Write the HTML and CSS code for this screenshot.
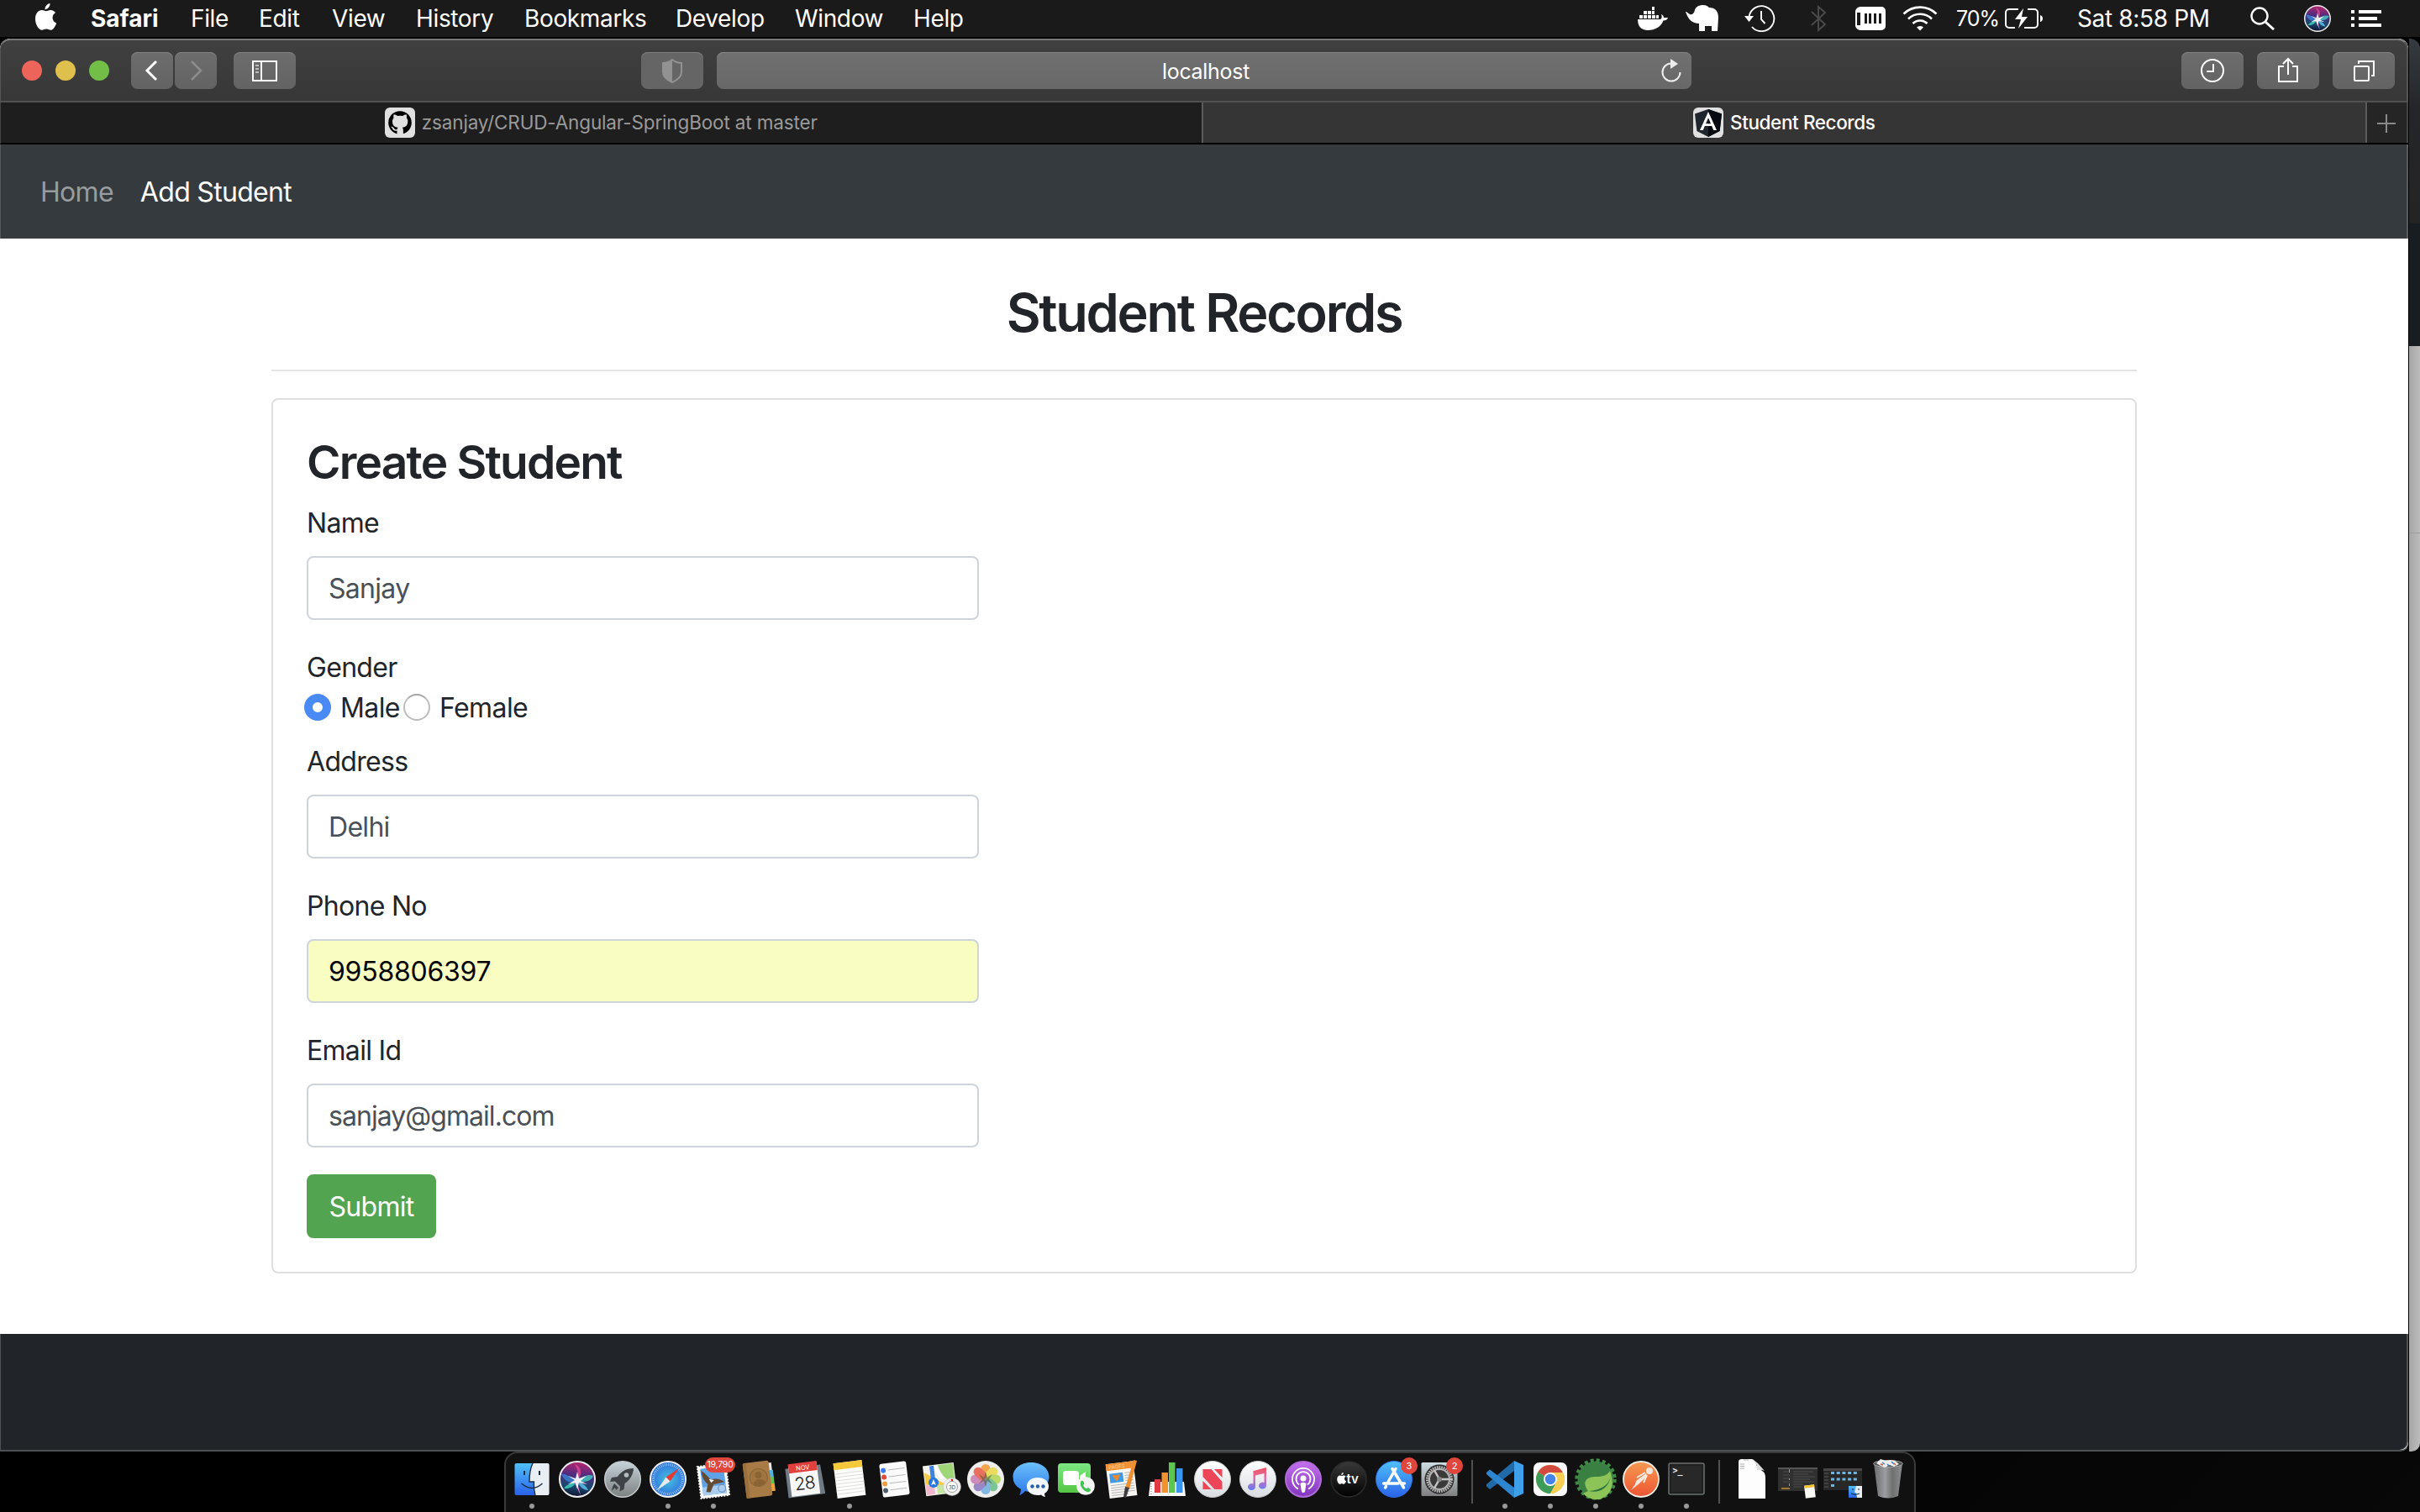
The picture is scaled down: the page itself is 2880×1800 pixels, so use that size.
FILE: index.html
```html
<!DOCTYPE html>
<html lang="en">
<head>
<meta charset="utf-8">
<title>Student Records</title>
<link rel="stylesheet" href="styles.css">
</head>
<body>
<svg class="defs" width="0" height="0" aria-hidden="true">
  <defs>
    <linearGradient id="silver" x1="0" y1="0" x2="0" y2="1"><stop offset="0" stop-color="#fff"/><stop offset="1" stop-color="#d8dbe0"/></linearGradient>
    <linearGradient id="rocketBg" x1="0" y1="0" x2="0" y2="1"><stop offset="0" stop-color="#c5d3da"/><stop offset="1" stop-color="#7d8080"/></linearGradient>
    <linearGradient id="blue" x1="0" y1="0" x2="0" y2="1"><stop offset="0" stop-color="#4fc0fa"/><stop offset="1" stop-color="#2a62ea"/></linearGradient>
    <linearGradient id="bubble" x1="0" y1="0" x2="0" y2="1"><stop offset="0" stop-color="#6bc0f8"/><stop offset="1" stop-color="#2c78f0"/></linearGradient>
    <linearGradient id="green" x1="0" y1="0" x2="0" y2="1"><stop offset="0" stop-color="#7be882"/><stop offset="1" stop-color="#55c544"/></linearGradient>
    <linearGradient id="purple" x1="0" y1="0" x2="0" y2="1"><stop offset="0" stop-color="#c471ee"/><stop offset="1" stop-color="#8136bd"/></linearGradient>
    <linearGradient id="black" x1="0" y1="0" x2="0" y2="1"><stop offset="0" stop-color="#3a3a3a"/><stop offset="1" stop-color="#000"/></linearGradient>
    <linearGradient id="orange" x1="0" y1="0" x2="0" y2="1"><stop offset="0" stop-color="#f59a52"/><stop offset="1" stop-color="#ef5533"/></linearGradient>
    <linearGradient id="note" x1="0" y1="0" x2="0" y2="1"><stop offset="0" stop-color="#f0525c"/><stop offset=".45" stop-color="#e36ea8"/><stop offset="1" stop-color="#5f7cf8"/></linearGradient>
    <linearGradient id="trash" x1="0" y1="0" x2="1" y2="0"><stop offset="0" stop-color="#6a6c6e"/><stop offset=".4" stop-color="#9b9da0"/><stop offset=".65" stop-color="#6d6f71"/><stop offset="1" stop-color="#8d8f92"/></linearGradient>
    <linearGradient id="prefs" x1="0" y1="0" x2="0" y2="1"><stop offset="0" stop-color="#cfdde4"/><stop offset="1" stop-color="#7e8080"/></linearGradient>
    <radialGradient id="safari"><stop offset="0" stop-color="#48c2dc"/><stop offset="1" stop-color="#2f6fe0"/></radialGradient>
    <linearGradient id="siri" x1=".5" y1="0" x2=".4" y2="1"><stop offset="0" stop-color="#b8256e"/><stop offset=".4" stop-color="#4a2c80"/><stop offset=".7" stop-color="#1a4a70"/><stop offset="1" stop-color="#101030"/></linearGradient>
    <symbol id="siri-orb" viewBox="0 0 44 44">
      <circle cx="22" cy="22" r="21" fill="url(#siri)" stroke="#eee" stroke-width="2"/>
      <path d="M22 24C12 18 7 15 3 16c4 8 9 12 19 8z" fill="#3a86d8" opacity=".8"/>
      <path d="M22 24C14 26 8 30 6 33c8 1 13-4 16-9z" fill="#3fd8c0" opacity=".8"/>
      <path d="M22 24c9-7 14-8 19-6-3 7-10 8-19 6z" fill="#46d8c8" opacity=".75"/>
      <path d="M22 24c2-10 0-14-3-20 8 3 10 12 3 20z" fill="#f04a90" opacity=".7"/>
      <path d="M22 24c8 3 11 7 13 11-6 0-10-4-13-11z" fill="#62c8f0" opacity=".8"/>
      <path d="M21 23l5 18-7-15z" fill="#ff8ae0"/>
      <path d="M22 13l2 8 9-3-7 6 8 4-10-2-2 8-2-8-9 2 8-5-8-5 9 3z" fill="#fff" opacity=".9"/>
    </symbol>
  </defs>
</svg>

<header class="menubar">
  <svg class="apple" viewBox="0 0 26 32"><path fill="#fff" d="M18 0c.3 3.800-2.900 7.300-6 7.200C11.700 3.900 15 .3 18 0zM13.300 9.200c1.500 0 3-1.300 5.400-1.300 2.600 0 4.700 1.400 5.900 3.200-5.400 3.300-4.300 10.600 1.100 12.600C24 28 21.400 31.800 18.800 31.800c-2 0-2.800-1.200-5.200-1.200-2.300 0-3.300 1.200-5.100 1.200C4.700 31.800.5 25 .5 18.400.5 12 4.300 8 8.200 8c2.300 0 3.900 1.200 5.100 1.200z"/></svg>
  <nav class="menus">
    <b>Safari</b><span>File</span><span>Edit</span><span>View</span><span>History</span><span>Bookmarks</span><span>Develop</span><span>Window</span><span>Help</span>
  </nav>
  <div class="status">
    <svg width="36" height="28" viewBox="0 0 36 28" fill="#fff"><path d="M0 15h27c2-1 2-3 1-6 2 1 3 2 3 4h5c-.5 2.500-3 3.500-5.500 3.500C27.500 24 21 28 12 28 4 28 0 23 0 15z"/><path d="M2 10h4v4H2zM7 10h4v4H7zM12 10h4v4h-4zM17 10h4v4h-4zM22 10h3v4h-3zM7 5h4v4H7zM12 5h4v4h-4zM17 5h3v4h-3zM17 0h3v4h-3z"/></svg>
    <svg width="41" height="32" viewBox="0 0 41 32" fill="#fff"><path d="M0 8c2 0 3 2 5 3 3 1 5-1 6-5 1-4 5-6 10-6 4 0 6 2 7 3 7 0 11 4 11 12l-1 16h-7v-6h-8v6h-7v-9C8 22 3 17 0 8z"/></svg>
    <svg width="38" height="32" viewBox="0 0 38 32" fill="none" stroke="#fff" stroke-width="1.900"><path d="M5.500 14A15 15 0 1 1 9 26"/><path d="M20 7v10l4.500 5"/><path d="M0 13h11l-5.500 7z" fill="#fff" stroke="none"/></svg>
    <svg width="20" height="32" viewBox="0 0 20 32" fill="none" stroke="#4a4a4a" stroke-width="2"><path d="M1 8l16 15-8 7V2l8 7L1 24"/></svg>
    <svg width="36" height="28" viewBox="0 0 36 28"><path fill="#fff" d="M6 0h25a5 5 0 0 1 5 5v18a5 5 0 0 1-5 5H6a7 7 0 0 1-6-5V5a7 7 0 0 1 6-5z"/><path d="M2 7h4v15H2zM11 8h3v12h-3zM16 8h3v12h-3zM22 8h3v12h-3zM28 8h3v12h-3z" fill="#1a1a1a"/></svg>
    <svg width="42" height="30" viewBox="0 0 42 30" fill="none" stroke="#fff" stroke-width="2.600"><path d="M1.500 9.500a28 28 0 0 1 39 0M7 15.500a20 20 0 0 1 28 0M12.500 21a12 12 0 0 1 17 0"/><path d="M17 25.500a6 6 0 0 1 8 0l-4 4z" fill="#fff" stroke="none"/></svg>
    <span class="battery">70%</span>
    <svg width="46" height="24" viewBox="0 0 46 24" fill="none" stroke="#fff" stroke-width="2"><path d="M16 1H5a4 4 0 0 0-4 4v14a4 4 0 0 0 4 4h7M27 1h8a4 4 0 0 1 4 4v14a4 4 0 0 1-4 4H23"/><path d="M22 0L12 13h7l-3 11 11-14h-7z" fill="#fff" stroke="none"/><path d="M42 8v8q3-1 3-4t-3-4z" fill="#fff" stroke="none"/></svg>
    <span class="clock">Sat 8:58 PM</span>
    <svg width="30" height="28" viewBox="0 0 30 28" fill="none" stroke="#fff" stroke-width="2.400"><circle cx="11" cy="11" r="9.500"/><path d="M18 18l10 9" stroke-width="3"/></svg>
    <svg width="32" height="32"><use href="#siri-orb"/></svg>
    <svg width="36" height="20" viewBox="0 0 36 20" fill="#fff"><path d="M0 0h4v4H0zM9 0h27v4H9zM0 8h4v4H0zM9 8h22v4H9zM0 16h4v4H0zM9 16h27v4H9z"/></svg>
  </div>
</header>

<div class="desktop">
  <div class="window">
    <div class="toolbar">
      <div class="lights"><i class="red"></i><i class="yellow"></i><i class="lime"></i></div>
      <div class="history">
        <div class="tool"><svg width="50" height="44" fill="none" stroke="#fff" stroke-width="3"><path d="M30 11L19 22l11 11"/></svg></div>
        <div class="tool"><svg width="50" height="44" fill="none" stroke="#8c8c8c" stroke-width="2.500"><path d="M20 11l11 11-11 11"/></svg></div>
      </div>
      <div class="tool sidebar"><svg width="74" height="44" fill="none" stroke="#fff" stroke-width="2"><path d="M23 11h28v23H23zM33 11v23"/><path d="M26 16h4M26 20h4M26 24h4" stroke="#bbb"/></svg></div>
      <div class="tool shield"><svg width="74" height="44"><path d="M37 9q5 4 11 4v11q0 7-11 12-11-5-11-12V13q6 0 11-4z" fill="none" stroke="#929292" stroke-width="2"/><path d="M37 9v27q-11-5-11-12V13q6 0 11-4z" fill="#929292"/></svg></div>
      <div class="address"><span>localhost</span><svg width="26" height="28" viewBox="0 0 26 28" fill="none" stroke="#eee" stroke-width="2"><path d="M13 5.500A10.500 10.500 0 1 0 23.500 16"/><path d="M12 0l9 6-9 6z" fill="#eee" stroke="none"/></svg></div>
      <div class="actions">
        <div class="tool"><svg width="74" height="44" fill="none" stroke="#fff" stroke-width="2"><circle cx="37" cy="22" r="13"/><path d="M38 14v9h-8"/></svg></div>
        <div class="tool"><svg width="74" height="44" fill="none" stroke="#fff" stroke-width="2"><path d="M32 17h-6v18h22V17h-6M37 27V8M31 14l6-6 6 6"/></svg></div>
        <div class="tool"><svg width="74" height="44" fill="none" stroke="#fff" stroke-width="2"><rect x="26" y="17" width="17" height="17" rx="1"/><path d="M31 14v-3h18v17h-3"/></svg></div>
      </div>
    </div>
    <div class="tabs">
      <div class="tab">
        <svg class="favicon" viewBox="0 0 36 36"><rect width="36" height="36" rx="6" fill="#e0e0e0"/><circle cx="18" cy="18" r="13.800" fill="#000"/><path fill="#e0e0e0" d="M14.500 32v-4.500c-3.500.8-5-1-5.800-3-.4-.8-1-1.200-1.500-1.600 2-.4 3 .8 3.800 2.100 1 1.500 2.300 1.400 3.600 1 .1-.9.5-1.700 1-2.200-5-.6-6.600-3.300-6.600-7.300 0-1.700.5-2.900 1.500-4-.4-1.500-.3-3 .2-4.200 1.800 0 3 .9 4.200 1.700a15 15 0 0 1 6.500 0c1.300-.8 2.400-1.700 4.200-1.700.5 1.200.6 2.700.2 4.200 1 1.100 1.500 2.300 1.500 4 0 4-1.700 6.700-6.600 7.300.7.700 1.200 1.800 1.200 3.200v5z"/></svg>
        <span>zsanjay/CRUD-Angular-SpringBoot at master</span>
      </div>
      <div class="tab active">
        <svg class="favicon" viewBox="0 0 36 36"><rect width="36" height="36" rx="6" fill="#e0e0e0"/><path d="M18 2l16 5.500-2.400 20.500L18 35 4.400 28 2 7.500z" fill="#20262e"/><path d="M18 2l16 5.500-2.400 20.500L18 35z" fill="#05090f"/><path d="M18 5L8 27h3.800l2-5h8.400l2 5H28zm0 7.200l3 7h-6z" fill="#fff"/></svg>
        <span>Student Records</span>
      </div>
      <div class="newtab"><svg width="24" height="24" stroke="#8a8a8a" stroke-width="2"><path d="M12 1v22M1 12h22"/></svg></div>
    </div>
    <nav class="navbar"><a class="home">Home</a><a class="add">Add Student</a></nav>
    <main class="page">
      <div class="container">
        <h2 class="title">Student Records</h2>
        <form class="card">
          <h3>Create Student</h3>
          <label>Name</label>
          <div class="field">Sanjay</div>
          <label class="gender">Gender</label>
          <div class="radios"><i class="radio checked"></i><span class="male">Male</span><i class="radio"></i><span>Female</span></div>
          <label>Address</label>
          <div class="field">Delhi</div>
          <label>Phone No</label>
          <div class="field filled">9958806397</div>
          <label>Email Id</label>
          <div class="field email">sanjay@gmail.com</div>
          <div class="submit">Submit</div>
        </form>
      </div>
    </main>
    <footer class="footer"></footer>
  </div>
  <div class="behind"></div>
</div>

<div class="dock-area">
<div class="dock">
  <div class="app run"><svg viewBox="0 0 54 54"><rect x="6.500" y="8" width="41" height="38" rx="2" fill="url(#blue)"/><path d="M28 8h17.500a2 2 0 0 1 2 2v34a2 2 0 0 1-2 2H31q-2-7-1.500-16H24q0-14 4-22z" fill="#e9eef5"/><path d="M18 17v5M36 17v5" stroke="#1c2b3c" stroke-width="2"/><path d="M14.500 32q13 11 25 0M28 8q-4 8-4 22h5.500q-.5 9 1.500 16" stroke="#1c2b3c" stroke-width="1.400" fill="none"/></svg></div>
  <div class="app"><svg viewBox="0 0 54 54"><use href="#siri-orb" x="5" y="5" width="44" height="44"/></svg></div>
  <div class="app"><svg viewBox="0 0 54 54"><circle cx="27" cy="27" r="21.300" fill="url(#rocketBg)" stroke="#c2cacd" stroke-width="1.500"/><path d="M40 14c-9 0-15 4-19 10l-7 1-2 5 6-.500 6 6-.5 6 5-2.500 1-7c6-4 10-10 10.500-18z" fill="#3f4345"/><circle cx="31.500" cy="22" r="2.800" fill="#b3bdc1"/><path d="M17 32l5 5-3 3-1-3-4 4 1-5z" fill="#3f4345"/></svg></div>
  <div class="app run"><svg viewBox="0 0 54 54"><circle cx="27" cy="27" r="21" fill="url(#safari)" stroke="#eef0f2" stroke-width="2"/><circle cx="27" cy="27" r="17.500" fill="none" stroke="#a9d3f5" stroke-width="3" stroke-dasharray=".8 1.490"/><path d="M40 14L24.500 24.500l5 5z" fill="#e8382f"/><path d="M14 40l10.500-15.500 5 5z" fill="#e8ecee"/></svg></div>
  <div class="app run"><svg viewBox="0 0 54 54"><g transform="rotate(-7 27 29)"><rect x="10" y="10" width="34" height="38" fill="#fff" stroke="#fff" stroke-width="2" stroke-dasharray="2 1.500"/><rect x="13" y="13" width="28" height="32" fill="#5fa3e6"/><path d="M13 35h28v10H13z" fill="#a9cdee"/><path d="M14 15c4 3 7 8 10 12 5-1 12 0 16 5-5 0-9 1-13 1l-5 9-5-1 3-9c-5-5-6-11-6-17z" fill="#654b31"/><path d="M22 26l6 2-4 3z" fill="#fff"/><circle cx="36" cy="39" r="4.500" fill="none" stroke="#6889ac"/></g></svg><span class="badge wide">19,790</span></div>
  <div class="app"><svg viewBox="0 0 54 54"><g transform="rotate(-7 27 27)"><path d="M40 9h4v10h-4z" fill="#e9e9e9"/><path d="M40 18h5v9h-5z" fill="#49b5e8"/><path d="M40 26h5v9h-5z" fill="#68bf55"/><path d="M40 34h5v9h-5z" fill="#f1a33b"/><rect x="10" y="6" width="31" height="42" rx="2" fill="#a87b46"/><path d="M10 7h4v41h-4z" fill="#98703c"/><circle cx="27" cy="25" r="10.500" fill="#a1753f" stroke="#8a6433"/><circle cx="27" cy="22" r="4" fill="#8a6433"/><path d="M19.500 32q2-5 7.500-5t7.500 5q-7 6-15 0z" fill="#8a6433"/></g></svg></div>
  <div class="app"><svg viewBox="0 0 54 54"><g transform="rotate(-7 27 27)"><path d="M6 12h42l2 35H6z" fill="#6f7b84"/><path d="M10 8h34v38H10z" fill="#f7f7f7"/><path d="M10 7h34v11H10z" fill="#e0413d"/><text x="27" y="15.800" class="cal-month">NOV</text><text x="27" y="39" class="cal-day">28</text></g></svg></div>
  <div class="app run"><svg viewBox="0 0 54 54"><g transform="rotate(-7 27 27)"><path d="M10 6h34v42H10z" fill="#fdfdfb"/><path d="M10 6h34v8H10z" fill="#f6c93a"/><path d="M10 19h34M10 23h34M10 27h34M10 31h34M10 35h34M10 39h34M10 43h34" stroke="#dcdcdc"/></g></svg></div>
  <div class="app"><svg viewBox="0 0 54 54"><g transform="rotate(-7 27 27)"><rect x="10.500" y="7" width="32" height="40" rx="2.500" fill="#fafafa"/><path d="M20 15h20M20 23h20M20 31h20M20 39h20" stroke="#b9b9b9"/><circle cx="14.500" cy="15" r="3" fill="#3b79f6"/><circle cx="14.500" cy="23" r="3" fill="#e04a3a"/><circle cx="14.500" cy="31" r="3" fill="#f09a38"/><circle cx="14.500" cy="39" r="3" fill="#4d5a6a"/></g></svg></div>
  <div class="app"><svg viewBox="0 0 54 54"><g transform="rotate(-7 27 27)"><path d="M8 9h37v36H8z" fill="#f4f2ea"/><path d="M26 10h18v24q-14-5-18-24z" fill="#9ed678"/><path d="M23 10q3 18 21 26" fill="none" stroke="#fff" stroke-width="4"/><path d="M9 17l24 17v5L9 31z" fill="#f7ca45"/><path d="M9 31l10 5v8H9z" fill="#f2b6cd"/><path d="M16 10h5v20h-5z" fill="#3d83e0"/><path d="M22 34h12v10H22z" fill="#c6e7a4"/></g><circle cx="19" cy="31" r="6" fill="#2478e0"/><path d="M19 27l3 7-3-1.500-3 1.500z" fill="#fff"/><circle cx="41" cy="36" r="10.500" fill="#f0f0f0" stroke="#bbb" stroke-width=".6"/><circle cx="41" cy="36" r="6.500" fill="#fff" stroke="#9b9b9b"/><text x="41" y="38.500" class="map-label">3D</text><circle cx="41" cy="28" r="1.300" fill="#d22"/></svg></div>
  <div class="app"><svg viewBox="0 0 54 54"><circle cx="27" cy="27" r="22" fill="#eeeeec"/><g opacity=".85"><rect x="21.500" y="9" width="11" height="17" rx="5.500" fill="#f29a38"/><rect x="21.500" y="9" width="11" height="17" rx="5.500" fill="#ecd945" transform="rotate(45 27 27)"/><rect x="21.500" y="9" width="11" height="17" rx="5.500" fill="#b3d650" transform="rotate(90 27 27)"/><rect x="21.500" y="9" width="11" height="17" rx="5.500" fill="#66bd88" transform="rotate(135 27 27)"/><rect x="21.500" y="9" width="11" height="17" rx="5.500" fill="#6fafe0" transform="rotate(180 27 27)"/><rect x="21.500" y="9" width="11" height="17" rx="5.500" fill="#8b76c0" transform="rotate(225 27 27)"/><rect x="21.500" y="9" width="11" height="17" rx="5.500" fill="#c77ab0" transform="rotate(270 27 27)"/><rect x="21.500" y="9" width="11" height="17" rx="5.500" fill="#ea5946" transform="rotate(315 27 27)"/></g><path d="M27 18l2 7 6-4-4 6 4 6-6-4-2 7-2-7-6 4 4-6-4-6 6 4z" fill="#555b3a" opacity=".6"/></svg></div>
  <div class="app"><svg viewBox="0 0 54 54"><path d="M27 7c12 0 21.500 7 21.500 17S39 42 27 42q-4 0-7-1-3 4-7 5 2-3 2-7Q5.500 34 5.500 24C5.500 14 15 7 27 7z" fill="url(#bubble)"/><path d="M35 25c8 0 13 4.500 13 10.500 0 4-2 6.500-5 8.500q0 2 1 4-3-.5-5-2.500-2 .5-4 .5c-8 0-13-4.500-13-10.500S27 25 35 25z" fill="#f4f8fd"/><g fill="#2b5fa8"><circle cx="28.500" cy="35.500" r="2.200"/><circle cx="35" cy="35.500" r="2.200"/><circle cx="41.500" cy="35.500" r="2.200"/></g></svg></div>
  <div class="app"><svg viewBox="0 0 54 54"><rect x="5" y="8" width="39" height="35" rx="4" fill="url(#green)"/><rect x="11" y="17" width="19" height="17" rx="3.500" fill="#fff"/><path d="M31 23l7-5v15l-7-5z" fill="#fff"/><circle cx="38" cy="35" r="10.800" fill="#f4f4f4"/><path d="M32 30q1-2 3-1l1.500 3-1.500 2q1 3 4 4l2-1 3 2q0 2-2 3-4 1-7-3-4-4-3-9z" fill="#42c253"/></svg></div>
  <div class="app"><svg viewBox="0 0 54 54"><g transform="rotate(-7 27 27)"><path d="M10 7h33v41H10z" fill="#f7f6f3"/><path d="M10 7h33v8H10z" fill="#ef9134"/><path d="M13 19h16v11H13z" fill="#3f9be8"/><path d="M16 21h10l-5 8z" fill="#f08a2c"/><path d="M31 20h10M31 23h10M31 26h10M31 29h10M13 33h28M13 36h28M13 39h28M13 42h28M13 45h20" stroke="#b5b5b5"/><text x="13" y="13.500" class="pages-label">PAGES</text></g><path d="M41 4l4 1-9 34-5-1z" fill="#ef8e2e"/><path d="M31 36l5 1-4 12-3-1z" fill="#3d3d40"/></svg></div>
  <div class="app"><svg viewBox="0 0 54 54"><path d="M7 30h40l2 17H5z" fill="#fafafa"/><path d="M8 32v13" stroke="#777" stroke-dasharray="1 2"/><path d="M12 27h7v16h-7z" fill="#e03b42"/><path d="M20.500 19h7.500v24h-7.500z" fill="#f0932f"/><path d="M29 7h7.500v36H29z" fill="#5cc650"/><path d="M38 14h7.500v29H38z" fill="#3b95f0"/></svg></div>
  <div class="app"><svg viewBox="0 0 54 54"><circle cx="27" cy="27" r="21.500" fill="url(#silver)" stroke="#c8cacd"/><path d="M15.500 15h10L38.500 30v9h-9L15.500 24zM15.500 29l10 10h-10zM29 15h9.500v10z" fill="#ec4658"/></svg></div>
  <div class="app"><svg viewBox="0 0 54 54"><circle cx="27" cy="27" r="21.500" fill="url(#silver)" stroke="#c8cacd"/><path d="M22 17l15-4v21.500a4.500 4 0 1 1-2.500-3.500V20L24 22.500v13.500a4.500 4 0 1 1-2.500-3.500V17z" fill="url(#note)"/></svg></div>
  <div class="app"><svg viewBox="0 0 54 54"><circle cx="27" cy="27" r="21" fill="url(#purple)" stroke="#b06bd8" stroke-width="2"/><g fill="none" stroke="#fff" stroke-width="1.800"><path d="M21 38.500a13 13 0 1 1 12 0M22 33.500a8.500 8.500 0 1 1 10 0"/></g><circle cx="27" cy="26" r="3.500" fill="#fff"/><path d="M23.500 32q3.500-2.500 7 0l-1.500 10q-2 2-4 0z" fill="#fff"/></svg></div>
  <div class="app"><svg viewBox="0 0 54 54"><circle cx="27" cy="27" r="21" fill="url(#black)" stroke="#2c2c2c" stroke-width="1.500"/><path transform="translate(13 19) scale(.43)" fill="#fff" d="M18 0c.3 3.800-2.900 7.300-6 7.200C11.700 3.900 15 .3 18 0zM13.300 9.200c1.500 0 3-1.300 5.400-1.300 2.600 0 4.700 1.400 5.900 3.200-5.400 3.300-4.300 10.600 1.100 12.600C24 28 21.400 31.800 18.800 31.800c-2 0-2.800-1.200-5.200-1.200-2.300 0-3.300 1.200-5.100 1.200C4.700 31.800.5 25 .5 18.400.5 12 4.300 8 8.200 8c2.300 0 3.900 1.200 5.100 1.200z"/><text x="24.500" y="32" class="tv-label">tv</text></svg></div>
  <div class="app"><svg viewBox="0 0 54 54"><circle cx="27" cy="27" r="21.500" fill="url(#blue)" stroke="#2d70e4"/><g stroke="#fff" stroke-width="3.500" stroke-linecap="round"><path d="M29 14.500L19 32M25 14.500L38.500 37M14.500 32H32M36.500 32H39.500M17.500 35.500L16.500 37"/></g></svg><span class="badge">3</span></div>
  <div class="app"><svg viewBox="0 0 54 54"><rect x="5.500" y="7" width="43" height="40" rx="1.500" fill="url(#prefs)"/><circle cx="27" cy="27" r="17.500" fill="#2b2b2b"/><circle cx="27" cy="27" r="14.500" fill="#4a4a4a" stroke="#bdbdbd" stroke-width="3" stroke-dasharray="1.600 1.100"/><circle cx="27" cy="27" r="12" fill="#3a3a3a" stroke="#b5b5b5" stroke-width="2"/><path d="M27 27h12M27 27l-6-10.500M27 27l-6 10.500" stroke="#c5c5c5" stroke-width="2.500"/><circle cx="27" cy="27" r="3" fill="#888"/></svg><span class="badge">2</span></div>
  <div class="sep"></div>
  <div class="app run"><svg viewBox="0 0 54 54"><path d="M38 5l11 5v34l-11 5z" fill="#3fa0ea"/><path d="M38 5v12L9 39l-4-3.500V33z" fill="#2269a8"/><path d="M5 19l4-3.500L38 37v12L5 21z" fill="#2f86d0"/></svg></div>
  <div class="app run"><svg viewBox="0 0 54 54"><rect x="7" y="7" width="40" height="40" rx="7" fill="#fafafa"/><circle cx="27" cy="27" r="17" fill="#f8cf52"/><path d="M27 27L12.300 18.500A17 17 0 0 1 41.700 18.500z" fill="#d24b3e"/><path d="M12.300 18.500A17 17 0 0 0 27 44l8-13.500-8-3.500z" fill="#3d9b5c"/><path d="M27 19h15A17 17 0 0 1 27 44l7-13z" fill="#f8cf52"/><circle cx="27" cy="27" r="8" fill="#fff"/><circle cx="27" cy="27" r="6.200" fill="#4583ec"/></svg></div>
  <div class="app run"><svg viewBox="0 0 54 54"><circle cx="27" cy="27" r="21.500" fill="#3a8043"/><circle cx="27" cy="27" r="22.500" fill="none" stroke="#3f8a45" stroke-width="4.500" stroke-dasharray="4 3.070"/><path d="M44 17c6 16 2 30-13 34-9 1-15-3-19-7l6-3c-9-12 0-18 10-17 8 0 13-2 16-7z" fill="#8cc457"/><path d="M45 24c-3 11-13 16-26 17 10 3 23-2 26-17z" fill="#2d7040"/></svg></div>
  <div class="app run"><svg viewBox="0 0 54 54"><circle cx="27" cy="27" r="21" fill="url(#orange)" stroke="#f6ede6" stroke-width="1.800"/><circle cx="37" cy="17" r="4" fill="#f4e6dc"/><path d="M33 20L21 29l-1 4-5 7 10-8 9-9z" fill="#fbeadf"/><path d="M34 22l-4 9M32 19l-10 6" stroke="#fbeadf" stroke-width="2"/></svg></div>
  <div class="app run"><svg viewBox="0 0 54 54"><rect x="6" y="8" width="42" height="37" rx="2" fill="#202020" stroke="#6a7270" stroke-width="1.500"/><path d="M9 11h36v31H9z" fill="#282828"/><text x="10.500" y="20" class="term-label">&gt;_</text></svg></div>
  <div class="sep"></div>
  <div class="app"><svg viewBox="0 0 54 54"><path d="M11 6q0-3 4-3h12c5 2 5 5 5 7l7 7q4 2 4 8v25H11z" fill="#fdfdfd"/><path d="M27 4q4 1 7 4l8 9q-4-2-9-1 1-8-6-12z" fill="#dcdcdc"/><path d="M13 9h5M13 11.500h5M13 14h5M17 4h6" stroke="#999" stroke-width=".8"/></svg></div>
  <div class="app"><svg viewBox="0 0 54 54"><rect x="4" y="13" width="47" height="28" fill="#303030"/><path d="M4 14h47" stroke="#555" stroke-width="2"/><path d="M10 18h8M10 22h8M10 26h8M10 30h8M22 18h24M22 21h18M22 24h26M22 27h20M22 30h25M22 33h12M22 36h10" stroke="#4c4c4c"/><path d="M17.500 15v4M17.500 26v2M17.500 32v3" stroke="#999"/><path d="M8 38h10" stroke="#c98f30" stroke-width="1.500"/><g transform="rotate(-7 42 42)"><path d="M36 34h12v15H36z" fill="#f8f8f4"/><path d="M36 34h12v3H36z" fill="#f3c432"/></g></svg></div>
  <div class="app"><svg viewBox="0 0 54 54"><rect x="4" y="14" width="46" height="26" fill="#282828"/><path d="M4 15.500h46" stroke="#494547" stroke-width="3"/><path d="M5 20h5M5 24h5M5 28h5M5 32h5M5 36h5" stroke="#5b5b5b"/><path d="M13 19.500h33M13 27h33M13 34.500h4" stroke="#70b4e0" stroke-width="2.800" stroke-dasharray="4 2.700"/><rect x="34" y="35" width="16" height="14" fill="url(#blue)"/><path d="M43 35h7v14h-6l-1-6h-2z" fill="#e9eef5"/><path d="M37 44q5 3 10 0M39 38v2M46 38v2" stroke="#123" fill="none"/></svg></div>
  <div class="app"><svg viewBox="0 0 54 54"><path d="M10 8h34l-5 39q-12 5-24 0z" fill="url(#trash)"/><ellipse cx="27" cy="8.500" rx="17.500" ry="4" fill="#4e5052" stroke="#a4a6a8"/><path d="M13 8l5-5 6 2 6-1 5 1 5 4-6 3-5-2-6 3-5-2z" fill="#eee"/><path d="M20 7l3 2M31 6l3 3M26 9l2 2" stroke="#3f7ab8" stroke-width="1.500"/><path d="M18 9l3 1M34 8l2 2" stroke="#c75b45" stroke-width="1.500"/></svg></div>
</div>
</div>
</body>
</html>
```
FILE: styles.css
```css
* { box-sizing: border-box; }

body {
  margin: 0;
  width: 2880px;
  height: 1800px;
  overflow: hidden;
  background: #000;
  color: #212529;
  font-family: Inter, "Liberation Sans", sans-serif;
  display: flex;
  flex-direction: column;
}

svg { display: block; flex: none; }
.defs { position: absolute; }

/* System menu bar */
.menubar {
  height: 46px;
  flex: none;
  display: flex;
  padding-left: 41px;
  background: #1a1a1a;
  border-bottom: 2px solid #000;
  color: #fff;
  font-size: 28px;
  line-height: 44px;
  letter-spacing: -0.35px;
  white-space: nowrap;
}
.apple { width: 27px; height: 32px; margin-top: 4px; }
.menus {
  width: 1881px;
  padding-left: 40px;
  display: grid;
  grid-template-columns: 119px 81px 87px 100px 129px 180px 142px 141px 80px;
}
.menus b { letter-spacing: 0; }
.status {
  display: grid;
  grid-template-columns: 57px 70px 79px 53px 56px 63px 59px 84px 208px 64px 56px 40px;
  align-items: center;
}
.battery { font-size: 25px; letter-spacing: -1px; padding-left: 1px; }
.clock { padding-left: 2px; }

/* Browser window */
.desktop { display: flex; height: 1682px; flex: none; }
.window {
  width: 2867px;
  display: flex;
  flex-direction: column;
  border-right: 1px solid #000;
  border-bottom: 2px solid #4d5153;
  border-radius: 12px 12px 10px 0;
  overflow: hidden;
  background: #fff;
}
.behind {
  width: 13px;
  border-radius: 0 12px 10px 0;
  background:
    linear-gradient(#9a9a9a, #9a9a9a) 0 588px / 13px 1px no-repeat,
    linear-gradient(#343a3f 0, #25262a 84px, #242424 220px, #181d21 220px, #181d21 366px, transparent 366px),
    linear-gradient(90deg, #a6a6a6, #bcbcbc);
}
.toolbar {
  height: 76px;
  flex: none;
  display: flex;
  align-items: center;
  border-top: 2px solid #777;
  border-bottom: 2px solid #515151;
  border-left: 1px solid #555;
  border-right: 2px solid #555;
  background: linear-gradient(#404040, #373737);
  border-radius: 12px 12px 0 0;
}
.lights { display: flex; gap: 16px; margin-left: 25px; }
.lights i { width: 24px; height: 24px; border-radius: 50%; }
.red { background: #ed655a; }
.yellow { background: #e0c04c; }
.lime { background: #72be47; }
.history { display: flex; gap: 2px; margin-left: 26px; }
.tool {
  height: 44px;
  border-radius: 8px;
  background: linear-gradient(#6d6d6d, #636363);
  box-shadow: inset 0 1px #808080;
}
.sidebar { margin-left: 20px; }
.shield { margin-left: 411px; background: #656565; }
.address {
  width: 1160px;
  height: 44px;
  margin-left: 16px;
  border-radius: 8px;
  display: grid;
  grid-template-columns: 1fr auto;
  align-items: center;
  padding: 0 11px 0 0;
  color: #fff;
  font-size: 25px;
  letter-spacing: -0.3px;
  background: linear-gradient(#707070, #686868);
  box-shadow: inset 0 1px #858585;
}
.address span { text-align: center; padding: 2px 0 0 41px; }
.actions { display: flex; gap: 16px; margin-left: 583px; }

.tabs {
  height: 50px;
  flex: none;
  display: flex;
  background: #1e1e1e;
  border-bottom: 2px solid #000;
  border-left: 1px solid #444;
}
.tab {
  width: 1429px;
  display: flex;
  align-items: center;
  justify-content: center;
  gap: 8px;
  color: #9a9a9a;
  font-size: 22.500px;
  letter-spacing: -0.15px;
  white-space: nowrap;
}
.tab.active {
  width: 1388px;
  color: #fff;
  font-weight: 500;
  letter-spacing: -0.4px;
  background: #353535;
  border-left: 2px solid #5b5b5b;
  border-right: 2px solid #5b5b5b;
}
.tab > span { padding-bottom: 1px; }
.favicon { width: 36px; height: 36px; }
.newtab { width: 49px; padding: 13px 0 0 11px; background: #252525; border-right: 2px solid #444; }

/* Application page */
.navbar {
  height: 112px;
  flex: none;
  display: flex;
  gap: 32px;
  align-items: center;
  padding: 1px 0 0 47px;
  font-size: 32px;
  letter-spacing: -0.7px;
  background: #353a3e;
  border-left: 1px solid #555b5f;
  border-right: 2px solid #555b5f;
}
.home { color: #999c9f; }
.add { color: #fff; }
.page { height: 1304px; flex: none; }
.container { width: 2220px; margin: 0 auto 0 323px; }
.title {
  height: 158px;
  margin: 0 0 32px;
  padding-top: 50px;
  border-bottom: 2px solid #e5e5e5;
  font-size: 63px;
  line-height: 76px;
  font-weight: 600;
  letter-spacing: -2.3px;
  text-align: center;
}
.card {
  height: 1042px;
  padding: 40px;
  border: 2px solid #dfdfdf;
  border-radius: 8px;
  display: flex;
  flex-direction: column;
  align-items: flex-start;
  font-size: 32px;
  line-height: 50px;
  letter-spacing: -0.7px;
}
.card h3 {
  height: 66px;
  margin: 0 0 16px;
  font-size: 55px;
  line-height: 69px;
  font-weight: 600;
  letter-spacing: -1.8px;
}
.card label { height: 48px; margin-bottom: 16px; }
.card .gender { margin-bottom: 0; }
.field {
  width: 800px;
  height: 76px;
  margin-bottom: 32px;
  padding: 12px 24px;
  border: 2px solid #ced4da;
  border-radius: 8px;
  color: #495057;
}
.filled { background: #fafdc2; color: #000; letter-spacing: -0.25px; }
.email { letter-spacing: -0.95px; }
.radios { display: flex; align-items: center; height: 48px; margin: 0 0 16px -3px; letter-spacing: -0.6px; }
.radios span { padding: 1px 0 0 1px; }
.radio {
  width: 32px;
  height: 32px;
  margin-right: 10px;
  border-radius: 50%;
  border: 2px solid #bdbdbd;
  border-top-color: #a5a5a5;
}
.radio.checked { border: 10px solid #4a8af5; background: #fff; }
.male { width: 76px; }
.submit {
  width: 154px;
  height: 76px;
  line-height: 77px;
  text-align: center;
  border-radius: 8px;
  background: #53a451;
  color: #fff;
}
.footer {
  flex: 1;
  background: #212529;
  border-right: 2px solid #4d5153;
  border-left: 1px solid #4d5153;
  border-radius: 0 0 10px 0;
}

/* Dock */
.dock-area {
  height: 72px;
  display: flex;
  justify-content: center;
  background: linear-gradient(135deg, #000 0 48%, #080808 100%);
}
.dock {
  width: 1680px;
  height: 72px;
  display: flex;
  padding: 4px 4px 0;
  border: 2px solid #3a3a3a;
  border-bottom: 0;
  border-radius: 16px 16px 0 0;
  background: #111;
}
.app { width: 54px; height: 66px; flex: none; position: relative; }
.app > svg { width: 54px; height: 54px; }
.run::after {
  content: "";
  display: block;
  width: 6px;
  height: 6px;
  margin: 2px auto 0;
  border-radius: 50%;
  background: #999;
}
.sep { width: 2px; height: 52px; margin: 4px 11px 0; flex: none; background: #505050; }
.badge {
  position: absolute;
  left: 35px;
  top: 1px;
  width: 20px;
  height: 20px;
  border-radius: 10px;
  background: #e0463b;
  color: #fff;
  font-size: 11px;
  line-height: 20px;
  text-align: center;
}
.badge.wide { left: 17px; width: 36px; font-size: 10.500px; line-height: 18px; height: 18px; letter-spacing: -0.2px; }
.cal-month { font: 7.500px Inter, sans-serif; fill: #fff; text-anchor: middle; }
.cal-day { font: 300 21px Inter, sans-serif; fill: #222; text-anchor: middle; letter-spacing: -0.8px; }
.map-label { font: 6px Inter, sans-serif; fill: #444; text-anchor: middle; }
.pages-label { font: 6px Inter, sans-serif; fill: #ffd9a8; }
.tv-label { font: 600 15px Inter, sans-serif; fill: #fff; }
.term-label { font: bold 10px "DejaVu Sans Mono", monospace; fill: #eee; }
```
